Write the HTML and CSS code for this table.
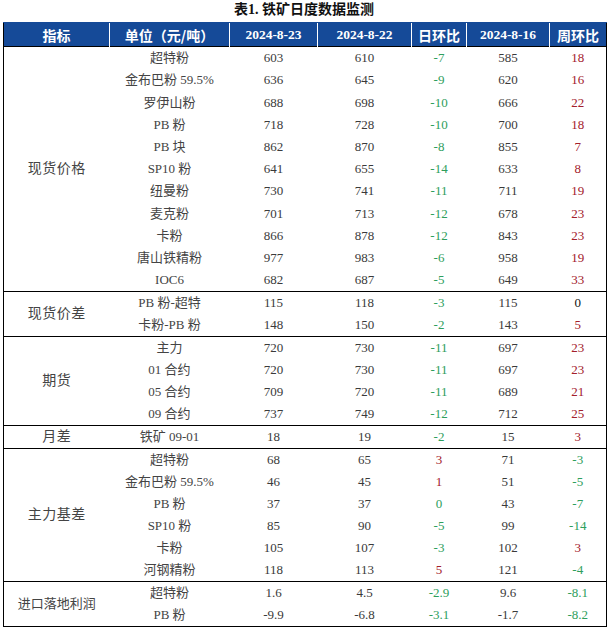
FILE: index.html
```html
<!DOCTYPE html>
<html lang="zh-CN">
<head>
<meta charset="utf-8">
<title>铁矿日度数据监测</title>
<link rel="stylesheet" href="styles.css">
</head>
<body>
<div class="title">表1. 铁矿日度数据监测</div>
<table class="tbl">
  <colgroup>
    <col class="c1"><col class="c2"><col class="c3"><col class="c4"><col class="c5"><col class="c6"><col class="c7">
  </colgroup>
  <thead>
    <tr>
      <th class="cn">指标</th>
      <th class="cn">单位（元/吨）</th>
      <th>2024-8-23</th>
      <th>2024-8-22</th>
      <th class="cn">日环比</th>
      <th>2024-8-16</th>
      <th class="cn">周环比</th>
    </tr>
  </thead>
  <tbody class="grp">
    <tr><td class="lab" rowspan="11">现货价格</td><td class="sub">超特粉</td><td>603</td><td>610</td><td class="g">-7</td><td>585</td><td class="r">18</td></tr>
    <tr><td class="sub">金布巴粉 59.5%</td><td>636</td><td>645</td><td class="g">-9</td><td>620</td><td class="r">16</td></tr>
    <tr class="tall"><td class="sub">罗伊山粉</td><td>688</td><td>698</td><td class="g">-10</td><td>666</td><td class="r">22</td></tr>
    <tr><td class="sub">PB 粉</td><td>718</td><td>728</td><td class="g">-10</td><td>700</td><td class="r">18</td></tr>
    <tr><td class="sub">PB 块</td><td>862</td><td>870</td><td class="g">-8</td><td>855</td><td class="r">7</td></tr>
    <tr><td class="sub">SP10 粉</td><td>641</td><td>655</td><td class="g">-14</td><td>633</td><td class="r">8</td></tr>
    <tr><td class="sub">纽曼粉</td><td>730</td><td>741</td><td class="g">-11</td><td>711</td><td class="r">19</td></tr>
    <tr class="tall"><td class="sub">麦克粉</td><td>701</td><td>713</td><td class="g">-12</td><td>678</td><td class="r">23</td></tr>
    <tr><td class="sub">卡粉</td><td>866</td><td>878</td><td class="g">-12</td><td>843</td><td class="r">23</td></tr>
    <tr><td class="sub">唐山铁精粉</td><td>977</td><td>983</td><td class="g">-6</td><td>958</td><td class="r">19</td></tr>
    <tr><td class="sub">IOC6</td><td>682</td><td>687</td><td class="g">-5</td><td>649</td><td class="r">33</td></tr>
  </tbody>
  <tbody class="grp">
    <tr><td class="lab" rowspan="2">现货价差</td><td class="sub">PB 粉-超特</td><td>115</td><td>118</td><td class="g">-3</td><td>115</td><td class="k">0</td></tr>
    <tr><td class="sub">卡粉-PB 粉</td><td>148</td><td>150</td><td class="g">-2</td><td>143</td><td class="r">5</td></tr>
  </tbody>
  <tbody class="grp">
    <tr><td class="lab" rowspan="4">期货</td><td class="sub">主力</td><td>720</td><td>730</td><td class="g">-11</td><td>697</td><td class="r">23</td></tr>
    <tr><td class="sub">01 合约</td><td>720</td><td>730</td><td class="g">-11</td><td>697</td><td class="r">23</td></tr>
    <tr><td class="sub">05 合约</td><td>709</td><td>720</td><td class="g">-11</td><td>689</td><td class="r">21</td></tr>
    <tr><td class="sub">09 合约</td><td>737</td><td>749</td><td class="g">-12</td><td>712</td><td class="r">25</td></tr>
  </tbody>
  <tbody class="grp">
    <tr><td class="lab">月差</td><td class="sub">铁矿 09-01</td><td>18</td><td>19</td><td class="g">-2</td><td>15</td><td class="r">3</td></tr>
  </tbody>
  <tbody class="grp">
    <tr><td class="lab" rowspan="6">主力基差</td><td class="sub">超特粉</td><td>68</td><td>65</td><td class="r">3</td><td>71</td><td class="g">-3</td></tr>
    <tr><td class="sub">金布巴粉 59.5%</td><td>46</td><td>45</td><td class="r">1</td><td>51</td><td class="g">-5</td></tr>
    <tr><td class="sub">PB 粉</td><td>37</td><td>37</td><td class="g">0</td><td>43</td><td class="g">-7</td></tr>
    <tr><td class="sub">SP10 粉</td><td>85</td><td>90</td><td class="g">-5</td><td>99</td><td class="g">-14</td></tr>
    <tr><td class="sub">卡粉</td><td>105</td><td>107</td><td class="g">-3</td><td>102</td><td class="r">3</td></tr>
    <tr><td class="sub">河钢精粉</td><td>118</td><td>113</td><td class="r">5</td><td>121</td><td class="g">-4</td></tr>
  </tbody>
  <tbody class="grp">
    <tr><td class="lab long" rowspan="2">进口落地利润</td><td class="sub">超特粉</td><td>1.6</td><td>4.5</td><td class="g">-2.9</td><td>9.6</td><td class="g">-8.1</td></tr>
    <tr><td class="sub">PB 粉</td><td>-9.9</td><td>-6.8</td><td class="g">-3.1</td><td>-1.7</td><td class="g">-8.2</td></tr>
  </tbody>
</table>
</body>
</html>
```
FILE: styles.css
```css
html, body {
  margin: 0;
  padding: 0;
  background: #ffffff;
}
body {
  width: 608px;
  font-family: "Liberation Serif", "Noto Sans CJK SC", serif;
  color: #3a3a3a;
}
.title {
  height: 22px;
  line-height: 20px;
  text-align: center;
  font-size: 14px;
  font-weight: bold;
  color: #111;
  font-family: "Liberation Serif", "Noto Sans CJK SC", serif;
}
.tbl {
  margin-left: 3px;
  width: 603px;
  table-layout: fixed;
  border-collapse: collapse;
  border-left: 1px solid #000;
  border-right: 1px solid #000;
  border-bottom: 1px solid #000;
}
.c1 { width: 106px; }
.c2 { width: 120px; }
.c3 { width: 88px; }
.c4 { width: 94px; }
.c5 { width: 55px; }
.c6 { width: 83px; }
.c7 { width: 57px; }
.tbl th {
  background: #154a98;
  color: #ffffff;
  height: 23px;
  padding: 0;
  font-size: 13.5px;
  font-weight: bold;
  text-align: center;
  border-left: 1px solid #ffffff;
  border-top: 1px solid #154a98;
}
.tbl th:first-child {
  border-left: none;
}
.tbl th.cn {
  font-family: "Noto Sans CJK SC", sans-serif;
  font-size: 14px;
}
.grp {
  border-top: 1px solid #000;
}
.tbl td {
  height: 22px;
  padding: 0;
  font-size: 13px;
  line-height: 16px;
  text-align: center;
  white-space: nowrap;
}
.tbl tr.tall td {
  height: 23px;
}
.tbl td.lab {
  font-size: 14px;
  letter-spacing: 0.5px;
  color: #444;
  vertical-align: middle;
}
.tbl td.long {
  font-size: 13px;
  letter-spacing: 0;
}
.tbl td.sub {
  color: #444;
}
.g { color: #2e9e5c; }
.r { color: #a3202c; }
.k { color: #111; }
```
